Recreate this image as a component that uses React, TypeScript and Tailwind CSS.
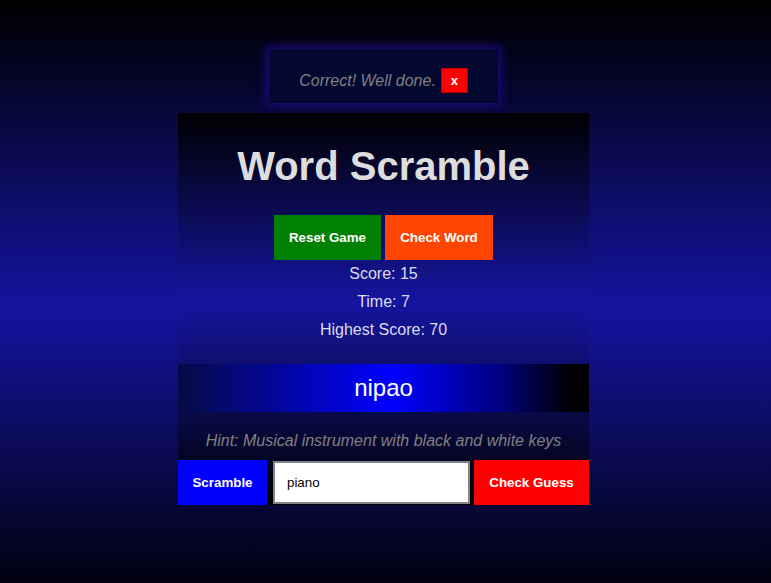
import { useState } from 'react'

/**
 * Word Scramble - small guessing game screen
 */

export default function App() {
  const [guess, setGuess] = useState('piano')
  const [showMessage, setShowMessage] = useState(true)

  return (
    <div
      className="min-h-[583px] w-full flex flex-col items-center pr-[4px] bg-[linear-gradient(to_bottom,#000000_0%,#1414a0_53%,#01010f_100%)] font-['Liberation_Sans',Arial,sans-serif]"
    >
      {/* Message toast */}
      <div className="h-[113px] flex items-end pb-[10px]">
        {showMessage && (
          <div className="flex items-center gap-[5px] bg-[#020830] pt-[19px] pb-[10px] px-[30px] shadow-[0_0_8px_3px_#1c0a7a] h-[54px] whitespace-nowrap">
            <span className="italic text-[16px] text-[#808080] leading-[18px]">Correct! Well done.</span>
            <button
              onClick={() => setShowMessage(false)}
              className="w-[27px] h-[25px] bg-[#ff0000] border border-[#c00000] text-white font-bold text-[13px] leading-none"
            >
              x
            </button>
          </div>
        )}
      </div>

      {/* Game card */}
      <div className="w-[411px] flex flex-col items-center text-center bg-[linear-gradient(to_bottom,#000000_0%,#1515a0_48%,#000000_100%)]">
        <h1 className="pt-[30px] pb-[26px] text-[40px] font-bold text-[#dddddd] leading-[46px]">Word Scramble</h1>

        <div className="flex gap-[4px]">
          <button className="bg-[#008000] text-white font-bold text-[13.33px] leading-[15px] py-[15px] w-[107px] whitespace-nowrap">Reset Game</button>
          <button className="bg-[#ff4500] text-white font-bold text-[13.33px] leading-[15px] py-[15px] w-[108px] whitespace-nowrap">Check Word</button>
        </div>

        <div className="text-[16px] text-[#dcdcf0] leading-[28px]">
          <p>Score: 15</p>
          <p>Time: 7</p>
          <p>Highest Score: 70</p>
        </div>

        {/* Scrambled word */}
        <div className="mt-[20px] w-full h-[48px] flex items-center justify-center bg-[linear-gradient(to_right,#060b45_0%,#0000ff_52%,#000080_78%,#000000_96%)]">
          <span className="text-[24px] text-white leading-none">nipao</span>
        </div>

        <p className="pt-[20px] pb-[10px] italic text-[16px] leading-[18px] text-[#808080]">
          Hint: Musical instrument with black and white keys
        </p>

        <div className="w-full flex h-[45px]">
          <button className="bg-[#0000ff] text-white font-bold text-[13.33px] w-[89px] whitespace-nowrap">Scramble</button>
          <input
            value={guess}
            onChange={e => setGuess(e.target.value)}
            className="ml-[6px] mr-[4px] my-px w-[197px] bg-white border-2 border-[#858585] px-[12px] text-[13.33px] text-black outline-none"
          />
          <button className="bg-[#ff0000] text-white font-bold text-[13.33px] flex-1 whitespace-nowrap">Check Guess</button>
        </div>
      </div>
    </div>
  )
}
